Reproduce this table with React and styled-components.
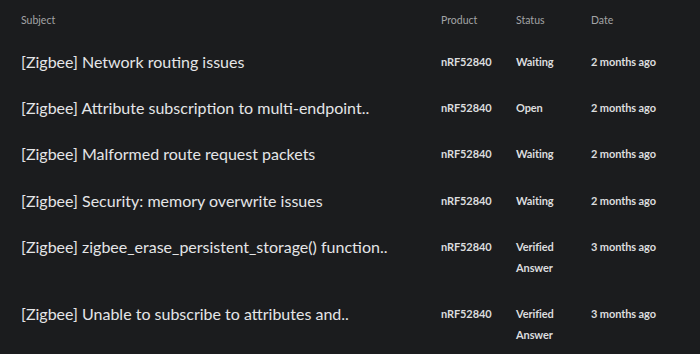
import styled, { createGlobalStyle } from 'styled-components';

const GlobalStyle = createGlobalStyle`
  html, body {
    margin: 0;
    padding: 0;
    background: #1b1c1e;
  }

  body {
    font-family: Lato, "Open Sans", sans-serif;
    -webkit-font-smoothing: antialiased;
  }
`;

const threads = [
  { subject: '[Zigbee] Network routing issues', product: 'nRF52840', status: 'Waiting', date: '2 months ago' },
  { subject: '[Zigbee] Attribute subscription to multi-endpoint..', product: 'nRF52840', status: 'Open', date: '2 months ago' },
  { subject: '[Zigbee] Malformed route request packets', product: 'nRF52840', status: 'Waiting', date: '2 months ago' },
  { subject: '[Zigbee] Security: memory overwrite issues', product: 'nRF52840', status: 'Waiting', date: '2 months ago' },
  { subject: '[Zigbee] zigbee_erase_persistent_storage() function..', product: 'nRF52840', status: 'Verified Answer', date: '3 months ago' },
  { subject: '[Zigbee] Unable to subscribe to attributes and..', product: 'nRF52840', status: 'Verified Answer', date: '3 months ago' },
];

export default function App() {
  return (
    <>
      <GlobalStyle />
      <Table>
        <HeaderRow>
          <HeadCell>Subject</HeadCell>
          <HeadCell>Product</HeadCell>
          <HeadCell>Status</HeadCell>
          <HeadCell>Date</HeadCell>
        </HeaderRow>

        {threads.map((thread) => (
          <Row key={thread.subject}>
            <Subject>{thread.subject}</Subject>
            <Meta>{thread.product}</Meta>
            <Meta $narrow>{thread.status}</Meta>
            <Meta>{thread.date}</Meta>
          </Row>
        ))}
      </Table>
    </>
  );
}

const columns = '420px 75px 75px 1fr';

export const Table = styled.div`
  display: flex;
  flex-direction: column;
  width: 700px;
  padding-left: 21px;
  box-sizing: border-box;
`;

export const HeaderRow = styled.div`
  display: grid;
  grid-template-columns: ${columns};
  padding: 10px 0 8px;
`;

export const HeadCell = styled.div`
  font-size: 10.5px;
  line-height: 21px;
  color: #a3a4a6;
`;

export const Row = styled.div`
  display: grid;
  grid-template-columns: ${columns};
  align-items: start;
  padding: 12px 0 13.2px;
`;

export const Subject = styled.div`
  font-size: 16px;
  line-height: 21px;
  color: #e4e5e7;
  white-space: nowrap;
`;

export const Meta = styled.div`
  font-size: 11px;
  font-weight: 700;
  line-height: 21px;
  letter-spacing: -0.1px;
  color: #dcdddf;
  max-width: ${(p) => (p.$narrow ? '48px' : 'none')};
`;
